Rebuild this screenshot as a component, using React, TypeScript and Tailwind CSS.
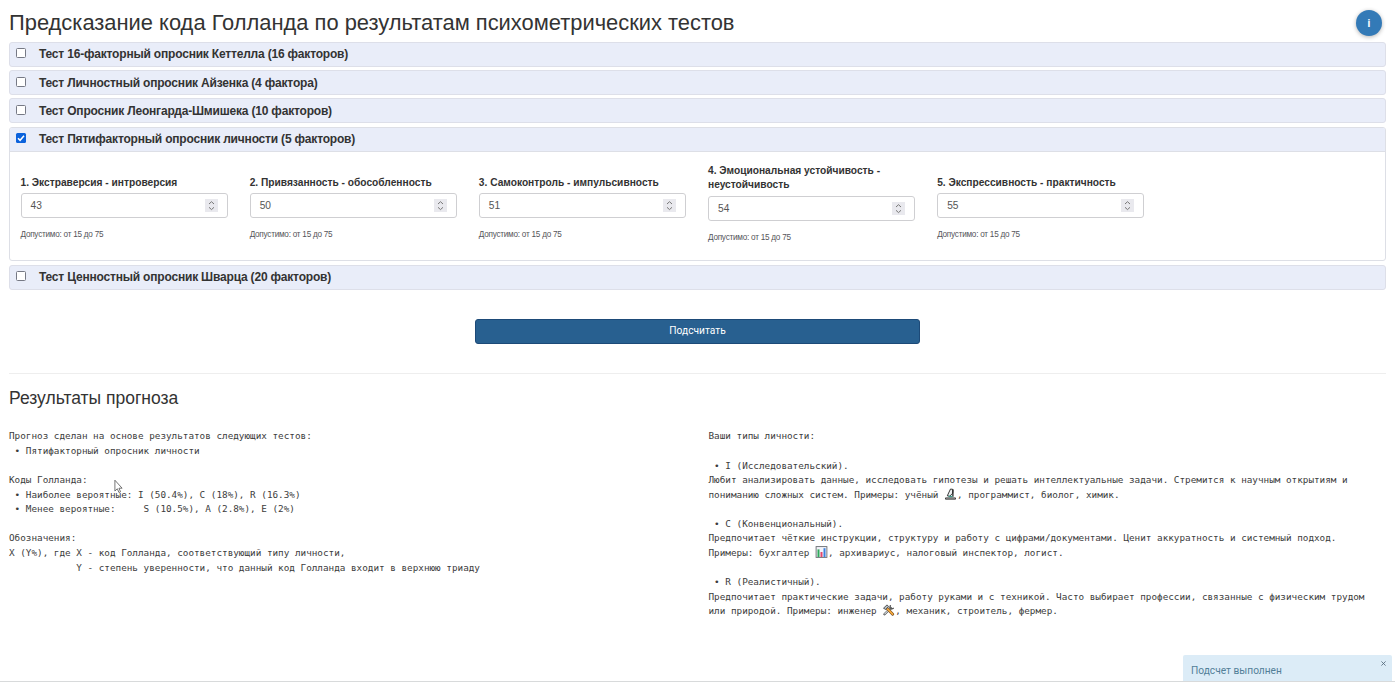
import React from 'react';

type Factor = { label: React.ReactNode; value: number };

const factors: Factor[] = [
  { label: '1. Экстраверсия - интроверсия', value: 43 },
  { label: '2. Привязанность - обособленность', value: 50 },
  { label: '3. Самоконтроль - импульсивность', value: 51 },
  { label: <>4. Эмоциональная устойчивость -<br />неустойчивость</>, value: 54 },
  { label: '5. Экспрессивность - практичность', value: 55 },
];

function Check({ checked = false }: { checked?: boolean }) {
  return checked ? (
    <span className="flex h-[10px] w-[10px] items-center justify-center rounded-[1.5px] bg-[#0b62dc]">
      <svg viewBox="0 0 10 10" className="h-[10px] w-[10px]" fill="none" stroke="#fff" strokeWidth="1.5">
        <path d="M2 5.2 4.1 7.3 8 2.8" />
      </svg>
    </span>
  ) : (
    <span className="h-[10px] w-[10px] rounded-[1.5px] border border-[#767985] bg-white" />
  );
}

function Header({ title, checked = false, open = false }: { title: string; checked?: boolean; open?: boolean }) {
  return (
    <div
      className={
        open
          ? 'flex h-[24px] items-center border-b border-[#dddfe6] bg-[#e9edf9] pl-[6px]'
          : 'flex h-[25px] items-center rounded-[3px] border border-[#dddfe9] bg-[#e9edf9] pl-[6px]'
      }
    >
      <span className="-mt-[2px] flex"><Check checked={checked} /></span>
      <span className="ml-[13px] whitespace-nowrap text-[12px] leading-[16px] font-bold tracking-[-0.19px]">{title}</span>
    </div>
  );
}

function Field({ label, value }: Factor) {
  return (
    <div className="pr-[11.5px] pl-[10.5px]">
      <div className="flex min-h-[29.7px] items-end pb-[3px] text-[10.2px] leading-[14.6px] font-bold">
        <span className="whitespace-nowrap">{label}</span>
      </div>
      <div className="flex h-[25px] items-center justify-between rounded-[3px] border border-[#cfcfd2] bg-white pr-[9px] pl-[9px] text-[10.2px] text-[#555]">
        <span>{value}</span>
        <span className="flex h-[13px] w-[13px] items-center justify-center bg-[#e9e9ee]">
          <svg viewBox="0 0 13 13" className="h-[13px] w-[13px]" fill="none" stroke="#777" strokeWidth="1">
            <path d="M4 5 6.5 2.7 9 5M4 8.3 6.5 10.6 9 8.3" />
          </svg>
        </span>
      </div>
      <div className="mt-[11px] whitespace-nowrap text-[8.2px] leading-[12px] tracking-[-0.25px] text-[#55555a]">Допустимо: от 15 до 75</div>
    </div>
  );
}

function Emoji({ children }: { children: React.ReactNode }) {
  return (
    <svg viewBox="0 0 12 12" className="inline-block h-[12px] w-[13px] align-[-2px]">
      {children}
    </svg>
  );
}

function Microscope() {
  return (
    <Emoji>
      <path d="M2.8 7.8 6 1 8.4 1.4 8.2 5.2 5.2 8.2Z" fill="#eef1f2" stroke="#222" strokeWidth=".9" />
      <path d="M8.4 1.6v7.2" fill="none" stroke="#222" strokeWidth="1.3" />
      <path d="M4 8.5h4" stroke="#3a9a89" strokeWidth="1.3" />
      <path d="M1 9.9h10v1.3H1z" fill="#ccc" stroke="#222" strokeWidth=".8" />
    </Emoji>
  );
}

function BarChart() {
  return (
    <Emoji>
      <rect x=".6" y=".6" width="10.8" height="10.8" fill="#f3f3fa" stroke="#686b70" strokeWidth=".9" />
      <path d="M2 3.4h2V11H2z" fill="#2fa95b" />
      <path d="M5 6h2v5H5z" fill="#e3476a" />
      <path d="M8 2.2h2V11H8z" fill="#3c82de" />
    </Emoji>
  );
}

function Tools() {
  return (
    <Emoji>
      <path d="M2 10.2 8.3 4" stroke="#444" strokeWidth="2.3" strokeLinecap="round" />
      <path d="M2.2 10 8.3 4" stroke="#ccd2d6" strokeWidth="1.1" strokeLinecap="round" />
      <path d="M8 1.1 7.4 3.8 9 5.1 11.3 4.2" fill="none" stroke="#555" strokeWidth="1.3" />
      <path d="M4.5 4.3 10.2 10.2" stroke="#6c461f" strokeWidth="2.8" strokeLinecap="round" />
      <path d="M5 4.8 10.1 10.1" stroke="#f5a83b" strokeWidth="1.8" strokeLinecap="round" />
      <path d="M1 4.2 4.5.9 6.2 2.5 3.2 5.5Z" fill="#b5bfc5" stroke="#333" strokeWidth=".8" />
    </Emoji>
  );
}

export default function App() {
  return (
    <div className="relative h-[682px] w-full overflow-hidden bg-white px-[9px] font-['Liberation_Sans',Arial,sans-serif] text-[#333]">
      <header className="flex h-[41.7px] items-start justify-between pt-[10px] pr-[4px]">
        <h1 className="whitespace-nowrap text-[21.9px] leading-[26px]"><span>Предсказание кода Голланда по результатам психометрических тестов</span></h1>
        <span className="flex h-[26px] w-[26px] items-center justify-center rounded-full bg-[#337ab7] pt-[2px] font-[Roboto,sans-serif] text-[10.5px] leading-[14px] font-bold text-white shadow-[0_1px_4px_rgba(0,0,0,0.3)]">i</span>
      </header>

      <main>
        <div className="flex flex-col gap-[3.4px]">
          <Header title="Тест 16-факторный опросник Кеттелла (16 факторов)" />
          <Header title="Тест Личностный опросник Айзенка (4 фактора)" />
          <Header title="Тест Опросник Леонгарда-Шмишека (10 факторов)" />
          <section className="h-[134.4px] overflow-hidden rounded-[3px] border border-[#dddfe6]">
            <Header title="Тест Пятифакторный опросник личности (5 факторов)" checked open />
            <div className="grid grid-cols-6 items-start pt-[11.7px]">
              {factors.map((f) => (
                <Field key={f.value} {...f} />
              ))}
            </div>
          </section>
          <Header title="Тест Ценностный опросник Шварца (20 факторов)" />
        </div>

        <div className="mt-[29px] flex justify-center">
          <button className="h-[25px] w-[445px] rounded-[3px] border border-[#1d4a78] bg-[#286090] font-[Roboto,sans-serif] text-[10.2px] text-white">Подсчитать</button>
        </div>
        <div className="mt-[29px] border-t border-[#eee]" />

        <h2 className="mt-[12.5px] text-[17.5px] leading-[24px]"><span>Результаты прогноза</span></h2>

        <div className="mt-[19.3px] grid grid-cols-[699.5px_1fr] font-['DejaVu_Sans_Mono',monospace] text-[9.32px] leading-[14.58px] whitespace-pre text-[#3c3c3c]">
          <div>
            <p>Прогноз сделан на основе результатов следующих тестов:</p>
            <p>{' • Пятифакторный опросник личности'}</p>
            <p> </p>
            <p>Коды Голланда:</p>
            <p>{' • Наиболее вероятные: I (50.4%), C (18%), R (16.3%)'}</p>
            <p>{' • Менее вероятные:     S (10.5%), A (2.8%), E (2%)'}</p>
            <p> </p>
            <p>Обозначения:</p>
            <p>X (Y%), где X - код Голланда, соответствующий типу личности,</p>
            <p>{'            Y - степень уверенности, что данный код Голланда входит в верхнюю триаду'}</p>
          </div>
          <div>
            <p>Ваши типы личности:</p>
            <p> </p>
            <p>{' • I (Исследовательский).'}</p>
            <p>Любит анализировать данные, исследовать гипотезы и решать интеллектуальные задачи. Стремится к научным открытиям и</p>
            <p className="h-[14.58px]">пониманию сложных систем. Примеры: учёный <Microscope />, программист, биолог, химик.</p>
            <p> </p>
            <p>{' • C (Конвенциональный).'}</p>
            <p>Предпочитает чёткие инструкции, структуру и работу с цифрами/документами. Ценит аккуратность и системный подход.</p>
            <p className="h-[14.58px]">Примеры: бухгалтер <BarChart />, архивариус, налоговый инспектор, логист.</p>
            <p> </p>
            <p>{' • R (Реалистичный).'}</p>
            <p>Предпочитает практические задачи, работу руками и с техникой. Часто выбирает профессии, связанные с физическим трудом</p>
            <p className="h-[14.58px]">или природой. Примеры: инженер <Tools />, механик, строитель, фермер.</p>
          </div>
        </div>
      </main>

      <svg viewBox="0 0 10 16" className="absolute top-[479px] left-[114px] h-[15px] w-[9px]" fill="#fff" stroke="#555" strokeWidth=".9">
        <path d="M1 1v12l2.7-2.5 1.8 4.2 1.8-.8-1.8-4H9Z" />
      </svg>

      <div className="absolute right-[3px] bottom-0 h-[27px] w-[209px] rounded-t-[2px] bg-[#dcecf7] pt-[9px] pl-[8px] font-[Roboto,sans-serif] text-[10.2px] leading-[14px] text-[#527f98]">
        <span>Подсчет выполнен</span>
        <svg viewBox="0 0 6 6" className="absolute top-[6px] right-[6px] h-[5px] w-[5px]" stroke="#526878" strokeWidth="1">
          <path d="m.5.5 5 5m0-5-5 5" />
        </svg>
      </div>
      <div className="absolute bottom-0 left-0 h-px w-full bg-[#d8dadb]" />
    </div>
  );
}
